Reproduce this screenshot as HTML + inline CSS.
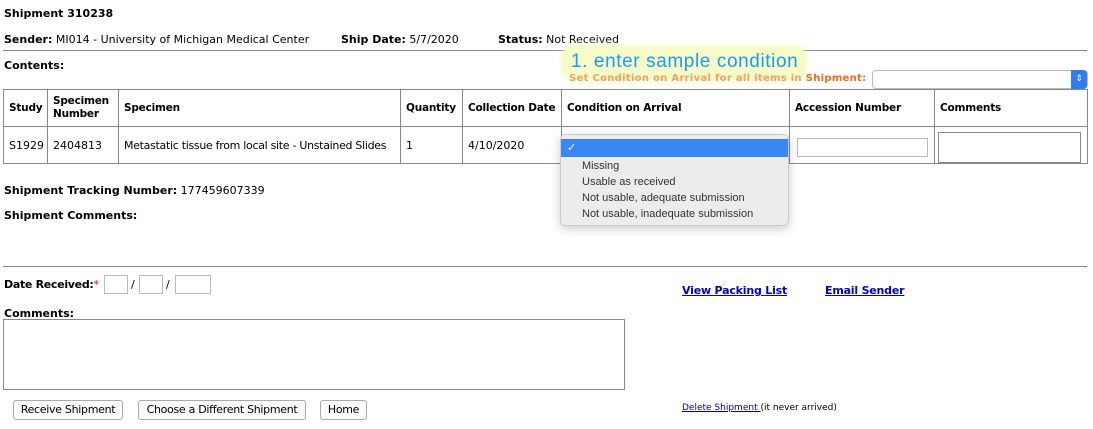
<!DOCTYPE html>
<html><head><meta charset="utf-8"><style>
body{margin:0;width:1093px;height:429px;position:relative;background:#fff;font-family:"DejaVu Sans",Verdana,sans-serif;font-size:11px;color:#000;overflow:hidden}
.a{position:absolute;white-space:nowrap}
b{font-weight:bold}
.hr{position:absolute;left:3px;width:1084px;height:0;border-top:1px solid #888}
table{position:absolute;left:3px;top:89px;border-collapse:collapse;width:1085px;table-layout:fixed}
td,th{border:1px solid #888;text-align:left;padding:0 5px;font-size:11px;white-space:nowrap;overflow:hidden}
th{height:36px;line-height:13px;font-size:10.5px;letter-spacing:-0.2px}
td{height:36px}
.in{position:absolute;border:1px solid #bbb;background:#fff}
.btn{position:absolute;top:400px;height:18px;border:1px solid #aaa;border-radius:3px;background:#fafafa;font-size:11px;line-height:18px;text-align:center;letter-spacing:-0.3px}
a{color:#00c}
</style></head><body>
<div class="a" style="left:4px;top:7px"><b>Shipment 310238</b></div>
<div class="a" style="left:4px;top:33px"><b>Sender:</b> MI014 - University of Michigan Medical Center</div>
<div class="a" style="left:341px;top:33px"><b>Ship Date:</b> 5/7/2020</div>
<div class="a" style="left:498px;top:33px"><b>Status:</b> Not Received</div>
<div class="hr" style="top:50px"></div>
<div class="a" style="left:4px;top:59px"><b>Contents:</b></div>
<div class="a" style="left:562px;top:46px;width:244px;height:34px;border-radius:12px;background:#f6fbc8;box-shadow:0 0 8px #f6fbc8"></div>
<div class="a" style="left:571px;top:51px;font-size:19px;letter-spacing:0.6px;color:#1a9cf0;font-family:'Liberation Sans',sans-serif">1. enter sample condition</div>
<div class="a" style="left:569px;top:73px;font-size:10px;font-weight:bold;color:#f4a060;letter-spacing:0.3px">Set Condition on Arrival for all items in <span style="color:#f26a1a">Shipment:</span></div>
<div class="a" style="left:872px;top:70px;width:214px;height:17px;border:1px solid #bbb;border-radius:4px;background:#fff"></div>
<div class="a" style="left:1071px;top:70px;width:16px;height:19px;border-radius:0 4px 4px 0;background:#2f7cf6;color:#fff;font-size:9px;text-align:center;line-height:19px">⇕</div>
<table>
<colgroup><col style="width:44px"><col style="width:71px"><col style="width:282px"><col style="width:62px"><col style="width:99px"><col style="width:228px"><col style="width:145px"><col style="width:153px"></colgroup>
<tr><th>Study</th><th>Specimen<br>Number</th><th>Specimen</th><th>Quantity</th><th>Collection Date</th><th>Condition on Arrival</th><th>Accession Number</th><th>Comments</th></tr>
<tr><td>S1929</td><td>2404813</td><td style="letter-spacing:-0.3px">Metastatic tissue from local site - Unstained Slides</td><td>1</td><td>4/10/2020</td><td></td><td></td><td></td></tr>
</table>
<div class="in" style="left:797px;top:138px;width:129px;height:17px"></div>
<div class="in" style="left:938px;top:132px;width:141px;height:29px;border-color:#888"></div>
<div class="a" style="left:560px;top:134px;width:227px;height:90px;background:#ececec;border:1px solid #ccc;border-radius:5px;box-shadow:0 3px 10px rgba(0,0,0,.2);font-family:'Liberation Sans',sans-serif;font-size:11px;color:#333">
<div style="margin-top:4px;height:18px;background:#3a86f2;color:#fff;padding-left:6px;line-height:18px">✓</div>
<div style="padding-left:21px;line-height:16px;margin-top:1px">Missing<br>Usable as received<br>Not usable, adequate submission<br>Not usable, inadequate submission</div>
</div>
<div class="a" style="left:4px;top:184px"><b>Shipment Tracking Number:</b> 177459607339</div>
<div class="a" style="left:4px;top:209px"><b>Shipment Comments:</b></div>
<div class="hr" style="top:266px"></div>
<div class="a" style="left:4px;top:278px;letter-spacing:-0.3px"><b>Date Received:</b><span style="color:red">*</span></div>
<div class="in" style="left:104px;top:275px;width:22px;height:17px"></div>
<div class="a" style="left:131px;top:278px">/</div>
<div class="in" style="left:139px;top:275px;width:22px;height:17px"></div>
<div class="a" style="left:166px;top:278px">/</div>
<div class="in" style="left:175px;top:275px;width:34px;height:17px"></div>
<div class="a" style="left:682px;top:284px;letter-spacing:-0.2px"><a href="#"><b>View Packing List</b></a></div>
<div class="a" style="left:825px;top:284px;letter-spacing:-0.2px"><a href="#"><b>Email Sender</b></a></div>
<div class="a" style="left:4px;top:307px"><b>Comments:</b></div>
<div class="in" style="left:3px;top:319px;width:620px;height:69px;border-color:#888"></div>
<div class="btn" style="left:13px;width:108px">Receive Shipment</div>
<div class="btn" style="left:138px;width:166px">Choose a Different Shipment</div>
<div class="btn" style="left:320px;width:45px">Home</div>
<div class="a" style="left:682px;top:403px;font-size:9px"><a href="#">Delete Shipment </a>(it never arrived)</div>
</body></html>
